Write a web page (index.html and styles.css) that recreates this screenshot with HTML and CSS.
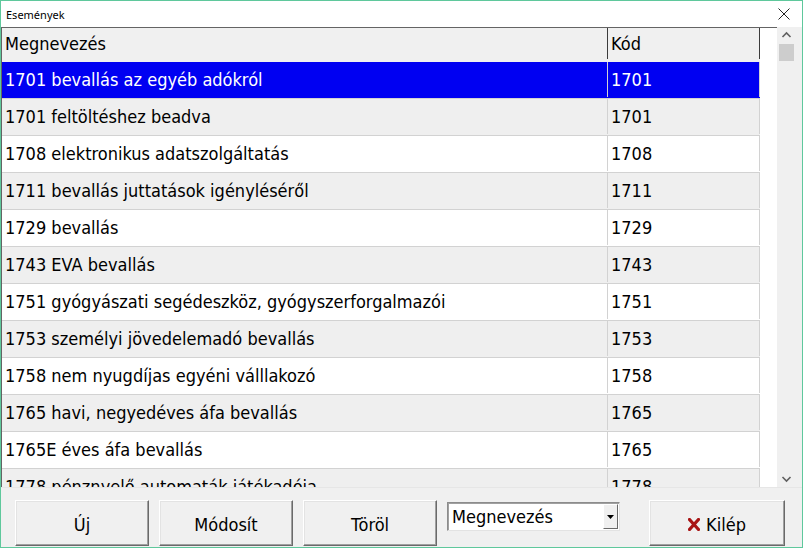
FILE: index.html
```html
<!DOCTYPE html>
<html lang="hu">
<head>
<meta charset="utf-8">
<title>Események</title>
<link rel="stylesheet" href="styles.css">
</head>
<body>
<div class="window">
  <div class="titlebar">
    <span class="title">Események</span>
    <svg class="close" width="12" height="12" viewBox="0 0 12 12"><path d="M0.5 0.5L11.5 11.5M11.5 0.5L0.5 11.5" stroke="#222" stroke-width="1"/></svg>
  </div>
  <div class="gridarea">
    <div class="table">
      <div class="row head">
        <div class="c1">Megnevezés</div>
        <div class="c2">Kód</div>
      </div>
      <div class="row sel"><div class="c1">1701 bevallás az egyéb adókról</div><div class="c2">1701</div></div>
      <div class="row alt"><div class="c1">1701 feltöltéshez beadva</div><div class="c2">1701</div></div>
      <div class="row"><div class="c1">1708 elektronikus adatszolgáltatás</div><div class="c2">1708</div></div>
      <div class="row alt"><div class="c1">1711 bevallás juttatások igényléséről</div><div class="c2">1711</div></div>
      <div class="row"><div class="c1">1729 bevallás</div><div class="c2">1729</div></div>
      <div class="row alt"><div class="c1">1743 EVA bevallás</div><div class="c2">1743</div></div>
      <div class="row"><div class="c1">1751 gyógyászati segédeszköz, gyógyszerforgalmazói</div><div class="c2">1751</div></div>
      <div class="row alt"><div class="c1">1753 személyi jövedelemadó bevallás</div><div class="c2">1753</div></div>
      <div class="row"><div class="c1">1758 nem nyugdíjas egyéni válllakozó</div><div class="c2">1758</div></div>
      <div class="row alt"><div class="c1">1765 havi, negyedéves áfa bevallás</div><div class="c2">1765</div></div>
      <div class="row"><div class="c1">1765E éves áfa bevallás</div><div class="c2">1765</div></div>
      <div class="row alt"><div class="c1">1778 pénznyelő automaták játékadója</div><div class="c2">1778</div></div>
    </div>
    <div class="scrollbar">
      <svg class="arrow" width="17" height="17" viewBox="0 0 17 17"><path d="M4.5 10L8.5 6L12.5 10" fill="none" stroke="#606060" stroke-width="1.6"/></svg>
      <div class="thumb"></div>
      <div class="track"></div>
      <svg class="arrow" width="17" height="17" viewBox="0 0 17 17"><path d="M4.5 7L8.5 11L12.5 7" fill="none" stroke="#606060" stroke-width="1.6"/></svg>
    </div>
  </div>
  <div class="bottom">
    <button class="btn">Új</button>
    <button class="btn">Módosít</button>
    <button class="btn">Töröl</button>
    <div class="combo">
      <span class="combo-text">Megnevezés</span>
      <span class="combo-btn"><svg width="7" height="4" viewBox="0 0 7 4"><path d="M0 0H7L3.5 4Z" fill="#000"/></svg></span>
    </div>
    <button class="btn exit"><svg width="12" height="13" viewBox="0 0 12 13"><path d="M1.5 1.5L10.5 11.5M10.5 1.5L1.5 11.5" stroke="#a81414" stroke-width="3.2" stroke-linecap="square"/></svg>Kilép</button>
  </div>
</div>
</body>
</html>
```

FILE: styles.css
```css
html, body {
  margin: 0;
  padding: 0;
  background: #ffffff;
}
.window {
  width: 803px;
  height: 548px;
  box-sizing: border-box;
  border: 1px solid #5fc89c;
  background: #f0f0f0;
  display: flex;
  flex-direction: column;
  overflow: hidden;
  font-family: "DejaVu Sans Condensed", "DejaVu Sans", sans-serif;
}
.titlebar {
  height: 26px;
  background: #ffffff;
  display: flex;
  align-items: center;
  justify-content: space-between;
  padding: 0 12px 0 5px;
  flex: none;
}
.title {
  font-family: "Noto Sans", sans-serif;
  font-size: 11px;
  color: #000;
}
.close {
  display: block;
}
.gridarea {
  height: 460px;
  display: flex;
  flex: none;
  background: #f0f0f0;
}
.table {
  width: 775px;
  background: #ffffff;
  border-left: 1px solid #646464;
  border-top: 1px solid #646464;
  overflow: hidden;
}
.row {
  display: flex;
  height: 37px;
  width: 758px;
  box-sizing: border-box;
  border-bottom: 1px solid #d2d2d2;
  padding-bottom: 1px;
  font-size: 18px;
  color: #000;
  background: #ffffff;
}
.row.alt {
  background: #efefef;
}
.row.sel {
  background: #0000f2;
  color: #ffffff;
}
.row.head {
  height: 34px;
  background: #f0f0f0;
  border-bottom: none;
  padding-bottom: 3px;
  font-size: 18px;
}
.c1, .c2 {
  display: flex;
  align-items: center;
  box-sizing: border-box;
  border-right: 1px solid #d2d2d2;
  padding-left: 3px;
  white-space: nowrap;
  overflow: hidden;
}
.c1 {
  width: 606px;
}
.c2 {
  width: 152px;
}
.row.head .c1, .row.head .c2 {
  border-right: 1px solid #3c3c3c;
}
.scrollbar {
  width: 17px;
  margin-left: 1px;
  display: flex;
  flex-direction: column;
  background: #f0f0f0;
}
.arrow {
  display: block;
  flex: none;
}
.thumb {
  height: 17px;
  margin: 0 1px;
  background: #cdcdcd;
  flex: none;
}
.track {
  flex: 1;
}
.bottom {
  flex: 1;
  display: flex;
  align-items: flex-start;
  padding: 12px 0 0 14px;
  gap: 10px;
  background: #f0f0f0;
  border-top: 1px solid #e6e6e6;
}
.btn {
  width: 134px;
  height: 46px;
  box-sizing: border-box;
  background: #f0f0f0;
  border: 1px solid;
  border-color: #ffffff #6a6a6a #6a6a6a #ffffff;
  box-shadow: inset -1px -1px 0 #a0a0a0, inset 1px 1px 0 #e3e3e3;
  font-family: "DejaVu Sans Condensed", "DejaVu Sans", sans-serif;
  font-size: 18px;
  color: #000;
  padding: 2px 0 0 0;
  display: flex;
  align-items: center;
  justify-content: center;
  gap: 6px;
}
.btn.exit {
  margin-left: 19px;
  width: 136px;
}
.combo {
  width: 173px;
  height: 29px;
  margin-top: 2px;
  box-sizing: border-box;
  background: #ffffff;
  border: 1px solid;
  border-color: #8c8c8c #e3e3e3 #e3e3e3 #8c8c8c;
  box-shadow: inset 1px 1px 0 #a0a0a0;
  display: flex;
  align-items: center;
  justify-content: space-between;
  padding: 0 1px 0 4px;
}
.combo-text {
  font-size: 18px;
  color: #000;
}
.combo-btn {
  width: 15px;
  height: 25px;
  box-sizing: border-box;
  background: #f0f0f0;
  border: 1px solid;
  border-color: #ffffff #6a6a6a #6a6a6a #ffffff;
  display: flex;
  align-items: center;
  justify-content: center;
}
.combo-btn svg {
  display: block;
}
```
